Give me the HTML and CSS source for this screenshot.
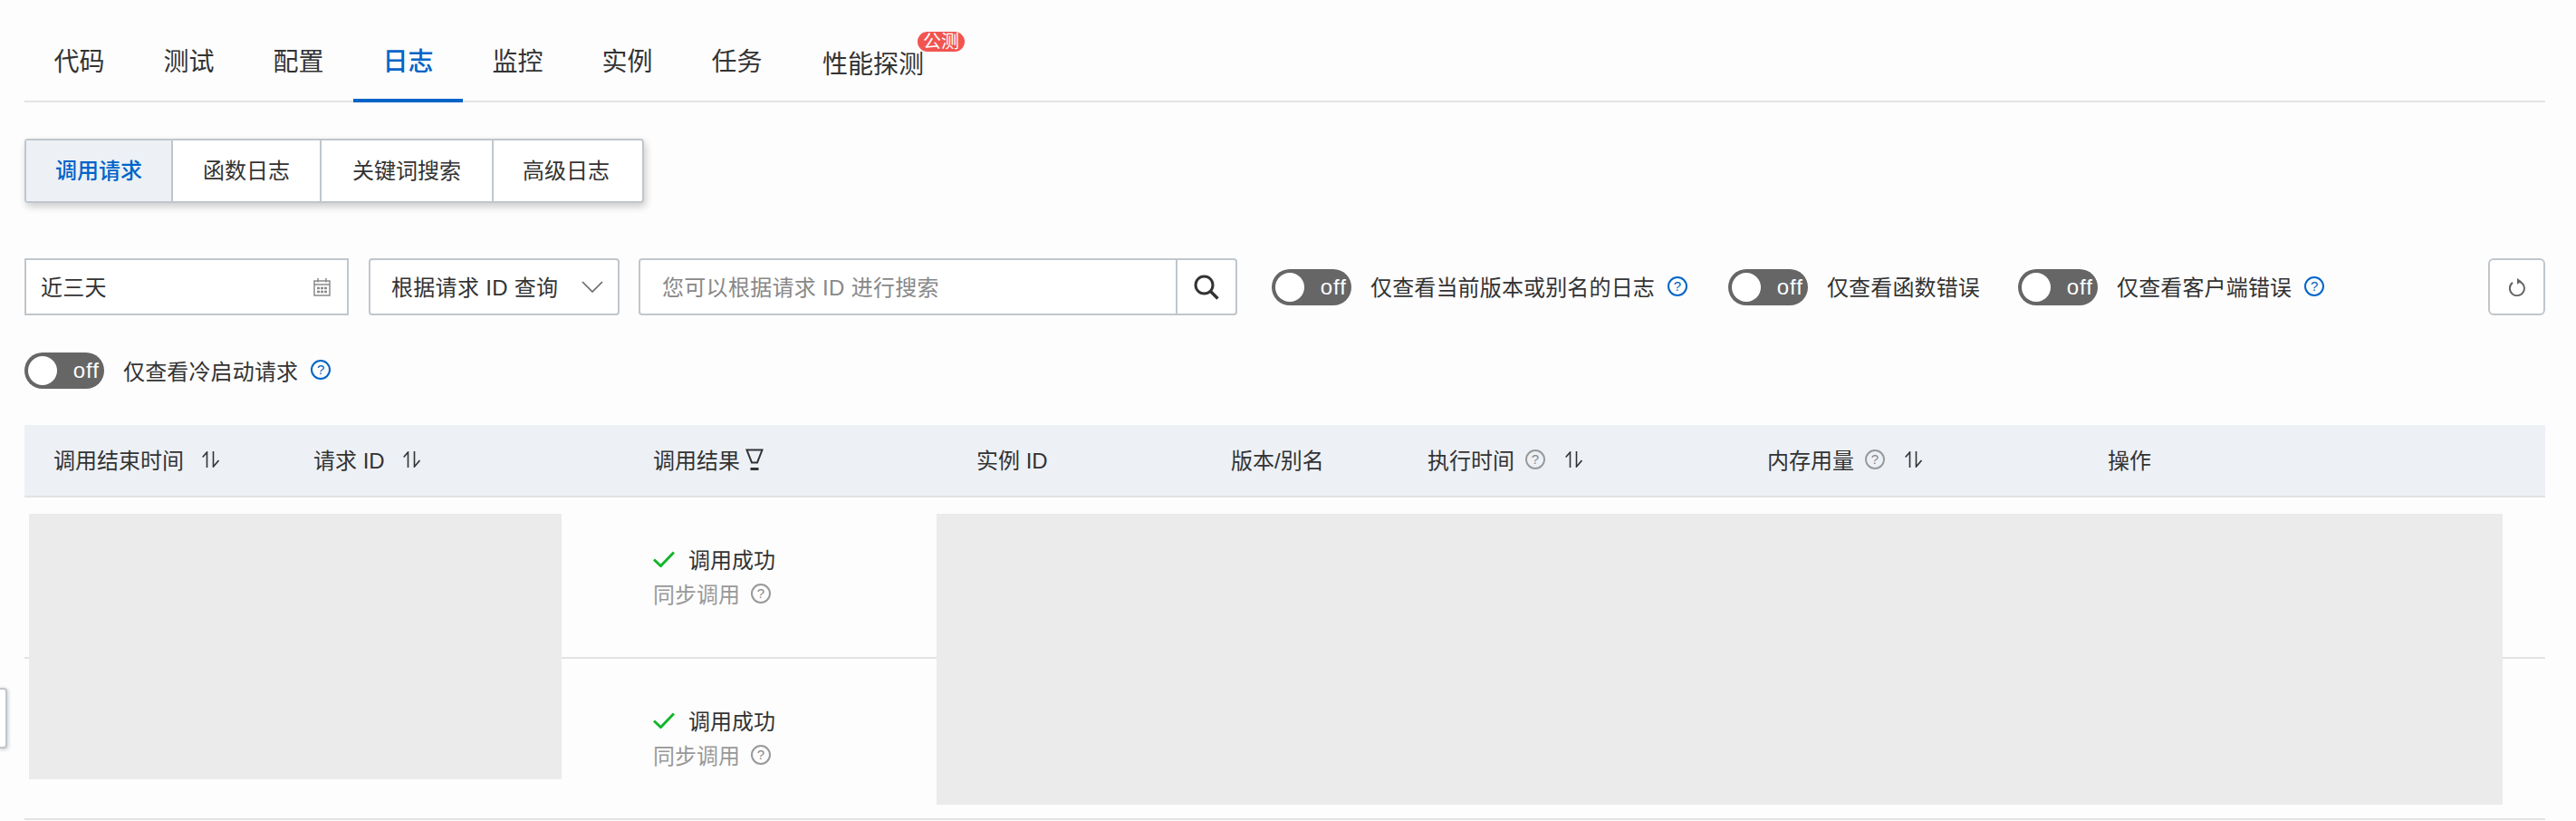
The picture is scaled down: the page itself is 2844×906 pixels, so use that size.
FILE: index.html
```html
<!DOCTYPE html>
<html lang="zh-CN">
<head>
    <meta charset="UTF-8">
    <title>函数日志</title>
    <link rel="stylesheet" href="styles.css">
</head>
<body>
    <div class="side-tab"></div>
    <div class="page">
        <div class="tabs">
            <div class="tab">代码</div>
            <div class="tab">测试</div>
            <div class="tab">配置</div>
            <div class="tab active">日志</div>
            <div class="tab">监控</div>
            <div class="tab">实例</div>
            <div class="tab">任务</div>
            <div class="tab tab-beta"><span class="tab-label">性能探测<span class="badge">公测</span></span></div>
        </div>

        <div class="sub-tabs">
            <div class="sub-tab active">调用请求</div>
            <div class="sub-tab">函数日志</div>
            <div class="sub-tab">关键词搜索</div>
            <div class="sub-tab">高级日志</div>
        </div>

        <div class="toolbar">
            <div class="field date-field">
                <span>近三天</span>
                <svg class="icon" width="19" height="20" viewBox="0 0 19 20">
                    <rect x="1" y="3" width="17" height="16" fill="none" stroke="#8a8a8a" stroke-width="1.5"/>
                    <path d="M1 7h17" stroke="#8a8a8a" stroke-width="1.5"/>
                    <path d="M5 0v4.500M14 0v4.500" stroke="#8a8a8a" stroke-width="1.500"/>
                    <path d="M4 11h3M8 11h3M12 11h3M4 15h3M8 15h3M12 15h3" stroke="#8a8a8a" stroke-width="2.500"/>
                </svg>
            </div>
            <div class="field select-field">
                <span>根据请求 ID 查询</span>
                <svg class="icon" width="24" height="13" viewBox="0 0 24 13">
                    <path d="M1 1l11 11L23 1" fill="none" stroke="#666" stroke-width="1.6"/>
                </svg>
            </div>
            <div class="field search-field">
                <span class="search-text">您可以根据请求 ID 进行搜索</span>
                <span class="search-btn">
                    <svg width="28" height="28" viewBox="0 0 28 28">
                        <circle cx="11.5" cy="11.5" r="9.5" fill="none" stroke="#333" stroke-width="3"/>
                        <path d="M18.5 18.5l8 8" stroke="#333" stroke-width="3.4"/>
                    </svg>
                </span>
            </div>
            <div class="filter">
                <span class="switch"><i class="knob"></i><span>off</span></span>
                <span class="filter-label">仅查看当前版本或别名的日志<span class="help">?</span></span>
            </div>
            <div class="filter">
                <span class="switch"><i class="knob"></i><span>off</span></span>
                <span class="filter-label">仅查看函数错误</span>
            </div>
            <div class="filter">
                <span class="switch"><i class="knob"></i><span>off</span></span>
                <span class="filter-label">仅查看客户端错误<span class="help">?</span></span>
            </div>
            <div class="refresh">
                <svg width="20" height="20" viewBox="0 0 20 20">
                    <path d="M11.500 3.400a8 8 0 1 1-6.500 1.500" fill="none" stroke="#666" stroke-width="2"/>
                    <path d="M10 0l5 3.400-5 3.400z" fill="#666"/>
                </svg>
            </div>
        </div>

        <div class="toolbar-second">
            <div class="filter">
                <span class="switch"><i class="knob"></i><span>off</span></span>
                <span class="filter-label">仅查看冷启动请求<span class="help">?</span></span>
            </div>
        </div>

        <div class="log-table">
            <div class="row head">
                <div class="cell">调用结束时间
                    <svg class="sort" width="19" height="18" viewBox="0 0 19 18"><path d="M5.500 18V1L.7 6.500M12.500 0v17l6-7" fill="none" stroke="#333" stroke-width="1.6"/></svg>
                </div>
                <div class="cell">请求 ID
                    <svg class="sort" width="19" height="18" viewBox="0 0 19 18"><path d="M5.500 18V1L.7 6.500M12.500 0v17l6-7" fill="none" stroke="#333" stroke-width="1.6"/></svg>
                </div>
                <div class="cell">调用结果
                    <svg class="funnel" width="20" height="24" viewBox="0 0 20 24"><path d="M1.500 1.500h17L13 15.500H7z" fill="none" stroke="#333" stroke-width="2"/><path d="M5.500 22.500h9" stroke="#333" stroke-width="3"/></svg>
                </div>
                <div class="cell">实例 ID</div>
                <div class="cell">版本/别名</div>
                <div class="cell">执行时间<span class="help grey">?</span>
                    <svg class="sort after-help" width="19" height="18" viewBox="0 0 19 18"><path d="M5.500 18V1L.7 6.500M12.500 0v17l6-7" fill="none" stroke="#333" stroke-width="1.6"/></svg>
                </div>
                <div class="cell">内存用量<span class="help grey">?</span>
                    <svg class="sort after-help" width="19" height="18" viewBox="0 0 19 18"><path d="M5.500 18V1L.7 6.500M12.500 0v17l6-7" fill="none" stroke="#333" stroke-width="1.6"/></svg>
                </div>
                <div class="cell">操作</div>
            </div>

            <div class="row">
                <div class="cell"></div>
                <div class="cell"></div>
                <div class="cell result">
                    <div class="result-line">
                        <svg width="24" height="18" viewBox="0 0 24 18"><path d="M1 9.500l7.500 7L23 1.500" fill="none" stroke="#12b52c" stroke-width="3"/></svg>
                        调用成功
                    </div>
                    <div class="result-type">同步调用<span class="help grey">?</span></div>
                </div>
            </div>
            <div class="row">
                <div class="cell"></div>
                <div class="cell"></div>
                <div class="cell result">
                    <div class="result-line">
                        <svg width="24" height="18" viewBox="0 0 24 18"><path d="M1 9.500l7.500 7L23 1.500" fill="none" stroke="#12b52c" stroke-width="3"/></svg>
                        调用成功
                    </div>
                    <div class="result-type">同步调用<span class="help grey">?</span></div>
                </div>
            </div>

            <!-- masked areas of the screenshot -->
            <div class="mask mask-left"></div>
            <div class="mask mask-right"></div>
        </div>
    </div>
</body>
</html>
```

FILE: styles.css
```css
* {
    margin: 0;
    padding: 0;
    box-sizing: border-box;
}

body {
    background: #fdfdfd;
    color: #333;
    font-family: "Liberation Sans", "Noto Sans CJK SC", sans-serif;
    font-size: 24px;
    overflow: hidden;
}

.page {
    padding: 0 34px 0 27px;
}

.side-tab {
    position: absolute;
    left: -4px;
    top: 759px;
    width: 12px;
    height: 67px;
    background: #fff;
    border: 2px solid #c0c6cc;
    border-radius: 4px;
    box-shadow: 1px 1px 4px rgba(0, 0, 0, 0.2);
}

/* main tabs */
.tabs {
    display: flex;
    height: 113px;
    border-bottom: 2px solid #e3e3e3;
}

.tab {
    width: 121px;
    height: 113px;
    padding-top: 48px;
    font-size: 28px;
    line-height: 42px;
    text-align: center;
}

.tab.active {
    color: #0064c8;
    font-weight: 500;
    border-bottom: 4px solid #0064c8;
}

.tab-beta {
    padding-top: 51px;
    width: auto;
    margin-left: 2px;
    padding-left: 32px;
}

.tab-label {
    position: relative;
    display: inline-block;
}

.badge {
    position: absolute;
    left: 105px;
    top: -16px;
    width: 52px;
    height: 22px;
    border-radius: 11px;
    background: #f25450;
    color: #fff;
    font-size: 20px;
    line-height: 22px;
}

/* sub tabs */
.sub-tabs {
    display: inline-flex;
    margin-top: 40px;
    height: 71px;
    background: #fff;
    border: 2px solid #c0c6cc;
    border-radius: 4px;
    box-shadow: 2px 4px 8px rgba(0, 0, 0, 0.2);
    vertical-align: top;
}

.sub-tab {
    padding: 0 33px;
    line-height: 67px;
    border-right: 2px solid #c0c6cc;
}

.sub-tab:first-child {
    padding: 0 32px;
}

.sub-tab:nth-child(3) {
    padding: 0 34px;
}

.sub-tab:last-child {
    padding: 0 36px 0 32px;
    border-right: none;
}

.sub-tab.active {
    background: #edf1f6;
    color: #0064c8;
    font-weight: 500;
}

/* toolbar */
.toolbar {
    display: flex;
    align-items: center;
    margin-top: 61px;
    height: 63px;
}

.toolbar-second {
    display: flex;
    margin-top: 41px;
}

.field {
    display: flex;
    align-items: center;
    justify-content: space-between;
    height: 63px;
    background: #fff;
    border: 2px solid #c0c6cc;
    border-radius: 4px;
}

.field > span:first-child {
    padding-bottom: 2px;
    letter-spacing: 0.3px;
}

.date-field {
    width: 358px;
    margin-right: 22px;
    padding: 0 18px 0 16px;
    border-radius: 0;
}

.select-field {
    width: 277px;
    margin-right: 21px;
    padding: 0 16px 0 23px;
}

.search-field {
    width: 661px;
    margin-right: 38px;
    padding-left: 24px;
}

.search-text {
    color: #888;
}

.search-btn {
    display: flex;
    align-items: center;
    justify-content: center;
    width: 66px;
    height: 100%;
    border-left: 2px solid #c0c6cc;
}

.filter {
    display: flex;
    align-items: center;
    gap: 21px;
    margin-right: 42px;
}

.filter-label {
    display: flex;
    align-items: center;
    gap: 14px;
    padding-bottom: 2px;
    letter-spacing: 0.15px;
}

.filter-label .help {
    margin-right: 3px;
}

.switch {
    display: flex;
    align-items: center;
    justify-content: space-between;
    width: 88px;
    height: 40px;
    padding: 0 5px 0 4px;
    border-radius: 20px;
    background: #666;
    color: #fff;
}

.switch span {
    letter-spacing: 1px;
}

.knob {
    width: 32px;
    height: 32px;
    border-radius: 50%;
    background: #fff;
}

.help {
    display: inline-block;
    width: 22px;
    height: 22px;
    border: 2px solid #0064c8;
    border-radius: 50%;
    color: #0064c8;
    font-size: 15px;
    line-height: 18px;
    letter-spacing: 0;
    text-align: center;
}

.help.grey {
    border-color: #999;
    color: #888;
}

.refresh {
    display: flex;
    align-items: center;
    justify-content: center;
    width: 63px;
    height: 63px;
    margin-left: auto;
    background: #fff;
    border: 2px solid #c0c6cc;
    border-radius: 6px;
}

/* table */
.log-table {
    position: relative;
    margin-top: 40px;
}

.row {
    display: grid;
    grid-template-columns: 287px 375px 357px 281px 217px 375px 376px 515px;
    height: 178px;
    border-bottom: 2px solid #e3e3e3;
}

.row.head {
    height: 80px;
    background: #edf1f6;
}

.cell {
    display: flex;
    align-items: center;
    padding-left: 32px;
    padding-bottom: 3px;
}

.sort {
    margin-left: 20px;
}

.sort.after-help {
    margin-left: 22px;
}

.funnel {
    margin-left: 6px;
}

.cell .help {
    margin-left: 12px;
}

.result {
    flex-direction: column;
    align-items: flex-start;
    justify-content: center;
    gap: 6px;
}

.result-line {
    display: flex;
    align-items: center;
    gap: 15px;
    height: 32px;
}

.result-type {
    display: flex;
    align-items: center;
    height: 32px;
    color: #999;
}

.mask {
    position: absolute;
    background: #ebebeb;
}

.mask-left {
    left: 5px;
    top: 98px;
    width: 588px;
    height: 293px;
}

.mask-right {
    left: 1007px;
    top: 98px;
    width: 1729px;
    height: 321px;
}
```
